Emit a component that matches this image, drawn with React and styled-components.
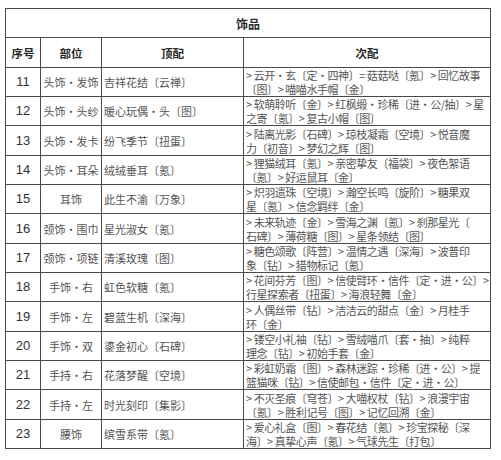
import React from 'react';
import styled, { createGlobalStyle } from "styled-components";

const GlobalStyle = createGlobalStyle`
  body {
    margin: 0;
    background: #ffffff;
    font-family: "Noto Sans CJK SC", "Noto Sans", sans-serif;
  }
`;

const Page = styled.div`
  width: 501px;
  height: 460px;
  padding: 8px 0 0 5px;
  box-sizing: border-box;
`;

const Table = styled.table`
  width: 485px;
  border-collapse: collapse;
  table-layout: fixed;
  border: 1px solid #4a4a4a;
`;

const Row = styled.tr`
  height: 29.35px;
`;

const Title = styled.th`
  border: 1px solid #4a4a4a;
  font-size: 12px;
  font-weight: 700;
  color: #2a2a2a;
  text-align: center;
  padding: 0;
`;

const Head = styled.th`
  border: 1px solid #4a4a4a;
  font-size: 11.5px;
  font-weight: 700;
  color: #2a2a2a;
  text-align: center;
  padding: 0;
`;

const Cell = styled.td`
  border: 1px solid #4a4a4a;
  padding: 0 ${(p) => (p.$center ? 0 : 2)}px;
  text-align: ${(p) => (p.$center ? "center" : "left")};
  font-family: ${(p) => (p.$num ? '"Liberation Sans", Arial, sans-serif' : '"Noto Sans CJK SC", sans-serif')};
  font-size: ${(p) => (p.$num ? 13 : 11)}px;
  letter-spacing: ${(p) => (p.$tight ? "-0.45px" : "0")};
  color: ${(p) => (p.$num ? "#333" : "#555")};
  line-height: 14px;
  white-space: nowrap;
  overflow: hidden;
  vertical-align: middle;
`;

const Line = styled.div`
  height: 14px;
  line-height: 14px;
`;

const rows = [
  ["11", "头饰•发饰", "吉祥花结〔云禅〕", "> 云开·玄〔定·四神〕= 菇菇哒〔氪〕> 回忆故事", "〔图〕> 喵喵水手帽〔金〕"],
  ["12", "头饰•头纱", "暖心玩偶·头〔图〕", "> 软萌聆听〔金〕> 红枫缎·珍稀〔进·公/抽〕> 星", "之寄〔氪〕> 复古小帽〔图〕"],
  ["13", "头饰•发卡", "纷飞季节〔扭蛋〕", "> 陆离光影〔石碑〕> 琼枝凝霜〔空境〕> 悦音魔", "力〔初音〕> 梦幻之辉〔图〕"],
  ["14", "头饰•耳朵", "绒绒垂耳〔氪〕", "> 狸猫绒耳〔氪〕> 亲密挚友〔福袋〕> 夜色絮语", "〔氪〕> 好运鼠耳〔金〕"],
  ["15", "耳饰", "此生不渝〔万象〕", "> 炽羽遗珠〔空境〕> 瀚空长鸣〔旋阶〕> 糖果双", "星〔氪〕> 信念羁绊〔金〕"],
  ["16", "颈饰•围巾", "星光淑女〔氪〕", "> 未来轨迹〔金〕> 雪海之渊〔氪〕> 刹那星光〔", "石碑〕> 薄荷糖〔图〕> 星条领结〔图〕"],
  ["17", "颈饰•项链", "清溪玫瑰〔图〕", "> 糖色颂歌〔阵营〕> 温情之遇〔深海〕> 波普印", "象〔钻〕> 猎物标记〔氪〕"],
  ["18", "手饰•右", "虹色软糖〔氪〕", "> 花间芬芳〔图〕> 信使臂环·信件〔定·进·公〕>", "行星探索者〔扭蛋〕> 海浪轻舞〔金〕"],
  ["19", "手饰•左", "碧蓝生机〔深海〕", "> 人偶丝带〔钻〕> 洁洁云的甜点〔金〕> 月桂手", "环〔金〕"],
  ["20", "手饰•双", "鎏金初心〔石碑〕", "> 镂空小礼袖〔钻〕> 雪绒喵爪〔套·抽〕> 纯粹", "理念〔钻〕> 初始手套〔金〕"],
  ["21", "手持•右", "花落梦醒〔空境〕", "> 彩虹奶霜〔图〕> 森林迷踪·珍稀〔进·公〕> 提", "篮猫咪〔钻〕> 信使邮包·信件〔定·进·公〕"],
  ["22", "手持•左", "时光刻印〔集影〕", "> 不灭圣痕〔穹苍〕> 大喵权杖〔钻〕> 浪漫宇宙", "〔氪〕> 胜利记号〔图〕> 记忆回溯〔金〕"],
  ["23", "腰饰", "缤雪系带〔氪〕", "> 爱心礼盒〔图〕> 春花结〔氪〕> 珍宝探秘〔深", "海〕> 真挚心声〔氪〕> 气球先生〔打包〕"],
];

const App = () => {
  return (
    <Page>
      <GlobalStyle />
      <Table>
        <colgroup>
          <col style={{ width: 35 }} />
          <col style={{ width: 61 }} />
          <col style={{ width: 142 }} />
          <col style={{ width: 247 }} />
        </colgroup>
        <thead>
          <Row>
            <Title colSpan={4}>饰品</Title>
          </Row>
          <Row>
            <Head>序号</Head>
            <Head>部位</Head>
            <Head>顶配</Head>
            <Head>次配</Head>
          </Row>
        </thead>
        <tbody>
          {rows.map(([no, part, top, l1, l2]) => (
            <Row key={no}>
              <Cell $center $num>{no}</Cell>
              <Cell $center>{part}</Cell>
              <Cell>{top}</Cell>
              <Cell $tight>
                <Line>{l1}</Line>
                <Line>{l2}</Line>
              </Cell>
            </Row>
          ))}
        </tbody>
      </Table>
    </Page>
  )
}

export default App
